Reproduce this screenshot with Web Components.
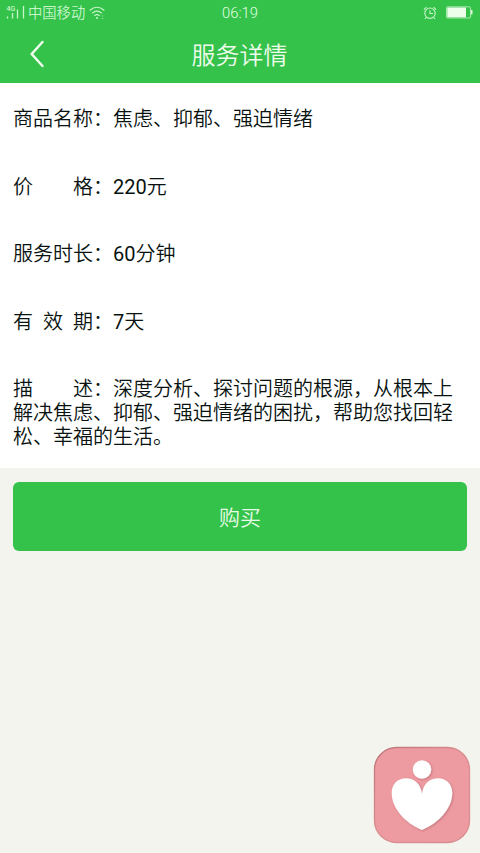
<!DOCTYPE html>
<html lang="zh-CN">
<head>
<meta charset="utf-8">
<title>服务详情</title>
<style>
html,body{margin:0;height:100%}
body{background:#f4f4ee;font-family:Roboto,"Noto Sans CJK SC",sans-serif;overflow:hidden}
</style>
</head>
<body>
<service-page>
  <status-bar carrier="中国移动" time="06:19"></status-bar>
  <nav-header>服务详情</nav-header>
  <detail-card>
    <detail-row label="商品名称">焦虑、抑郁、强迫情绪</detail-row>
    <detail-row label="价格"><b>220</b>元</detail-row>
    <detail-row label="服务时长"><b>60</b>分钟</detail-row>
    <detail-row label="有效期"><b>7</b>天</detail-row>
    <detail-row label="描述">深度分析、探讨问题的根源，从根本上解决焦虑、抑郁、强迫情绪的困扰，帮助您找回轻松、幸福的生活。</detail-row>
  </detail-card>
  <buy-button>购买</buy-button>
  <heart-badge></heart-badge>
</service-page>
<script>
const define = (name, render) => customElements.define(name, class extends HTMLElement {
  constructor() {
    super();
    this.attachShadow({ mode: 'open' });
  }
  connectedCallback() {
    this.shadowRoot.innerHTML = render(this);
  }
});

define('service-page', () => `
<style>:host{display:flex;flex-direction:column;position:relative;width:480px;height:853px;background:#f4f4ee;overflow:hidden}</style>
<slot></slot>`);

define('status-bar', el => `
<style>
:host{display:grid;grid-template-columns:1fr auto 1fr;align-items:center;height:25px;padding:0 6px;background:#34c24b;color:#c8f5ca;font-size:14px;line-height:24px;font-weight:350}
div{display:flex;align-items:center}
.right{justify-content:flex-end;gap:9px}
svg{display:block;flex:none}
.carrier{margin:0 4px 0 3px;font-size:14.3px}
.time{font-size:14.8px;padding-top:1px;font-weight:300;color:#e0ffe0}
</style>
<div>
  <svg width="19" height="15" viewBox="0 0 19 15"><text x="0.5" y="6" font-size="7" font-weight="500" fill="currentColor">4G</text>
    <path d="M1.5 11.5v2M6.5 8v5.500M11.500 4.500v9M17.500 1v12.500" stroke="currentColor" stroke-width="1.300" fill="none"/></svg>
  <span class="carrier">${el.getAttribute('carrier')}</span>
  <svg width="16" height="14" viewBox="0 0 16 14" fill="none" stroke="currentColor" stroke-width="1.1"><path d="M.6 4.500Q8-2 15.400 4.500M3 7.300Q8 2.900 13 7.300M5.300 9.800Q8 7.500 10.700 9.800"/><circle cx="8" cy="12" r="1" fill="currentColor" stroke="none"/><path d="M13.500 9.500v1M13.500 12v1" stroke-width="1.500" opacity=".6"/></svg>
</div>
<span class="time">${el.getAttribute('time')}</span>
<div class="right">
  <svg width="14" height="14" viewBox="0 0 14 14" fill="none" stroke="currentColor" stroke-width="1.1"><circle cx="7" cy="7.200" r="5.200"/><path d="M7 4.500v3h3M.9 3.600 3.400 1.200M13.100 3.600 10.600 1.200M3.300 11.300 2 13M10.700 11.300 12 13"/></svg>
  <svg width="28" height="13" viewBox="0 0 28 13"><rect x=".5" y=".8" width="24" height="11.200" rx="1" fill="none" stroke="#a9eaae"/><rect x="1.300" y="1.500" width="18.700" height="9.800" fill="#edffeb"/><path d="M25 4h1.500v4.500H25z" fill="#d8f8d8"/></svg>
</div>`);

define('nav-header', () => `
<style>
:host{display:grid;grid-template-columns:52px 1fr 52px;align-items:center;height:58px;background:#34c24b;color:#effcec;font-size:24px;line-height:36px;font-weight:350;text-align:center}
svg{display:block;margin-left:29px}
span{margin-left:-1px;padding-top:3px}
</style>
<svg width="16" height="28" viewBox="0 0 16 28" fill="none" stroke="#f4fff2" stroke-width="2.400" stroke-linecap="round"><path d="M13.500 2 2.700 14l10.800 12"/></svg>
<span><slot></slot></span>`);

define('detail-card', () => `
<style>:host{display:flex;flex-direction:column;gap:43.5px;box-sizing:border-box;height:385px;padding:23px 13px 0;background:#fff;color:#08120f;font:350 20px/24px "Noto Sans CJK SC",sans-serif}</style>
<slot></slot>`);

define('detail-row', el => `
<style>
:host{display:block;word-break:break-all}
.label{display:inline-flex;justify-content:space-between;width:80px;white-space:nowrap}
::slotted(b){font:400 20px/0 Roboto,sans-serif}
</style>
<span class="label">${[...el.getAttribute('label')].map(c => `<span>${c}</span>`).join('')}</span>：<slot></slot>`);

define('buy-button', () => `
<style>
:host{display:block;margin:14px 13px 0}
button{display:block;width:100%;height:69px;padding:3px 0 0;border:0;border-radius:6px;background:#34c24b;color:#e9fbe6;font:350 21px/30px Roboto,"Noto Sans CJK SC",sans-serif}
</style>
<button><slot></slot></button>`);

define('heart-badge', () => `
<style>
:host{display:block;position:absolute;left:373px;top:746px;width:98px;height:98px}
svg{display:block}
</style>
<svg width="98" height="98" viewBox="0 0 98 98">
  <defs>
    <linearGradient id="edge" x1="0" y1="0" x2="1" y2="1"><stop offset="0" stop-color="#b97478"/><stop offset=".5" stop-color="#dc8e92"/><stop offset="1" stop-color="#d98c90"/></linearGradient>
    <filter id="shade" x="-20%" y="-20%" width="140%" height="140%"><feDropShadow dx="1" dy="1" stdDeviation="1" flood-color="#9d5258" flood-opacity=".5"/></filter>
  </defs>
  <rect x="1.500" y="1.500" width="95" height="95" rx="22" fill="#ed9ba1" stroke="url(#edge)" stroke-width="1.300"/>
  <g fill="#fff" filter="url(#shade)">
    <circle cx="49" cy="23.500" r="9.300"/>
    <path d="M49 48C48 38 41 32.300 33 32.300C24 32.300 18.700 39 18.700 47C18.700 62 32 77 49 84C66 77 79.300 62 79.300 47C79.300 39 74 32.300 65 32.300C57 32.300 50 38 49 48Z"/>
  </g>
</svg>`);
</script>
</body>
</html>
